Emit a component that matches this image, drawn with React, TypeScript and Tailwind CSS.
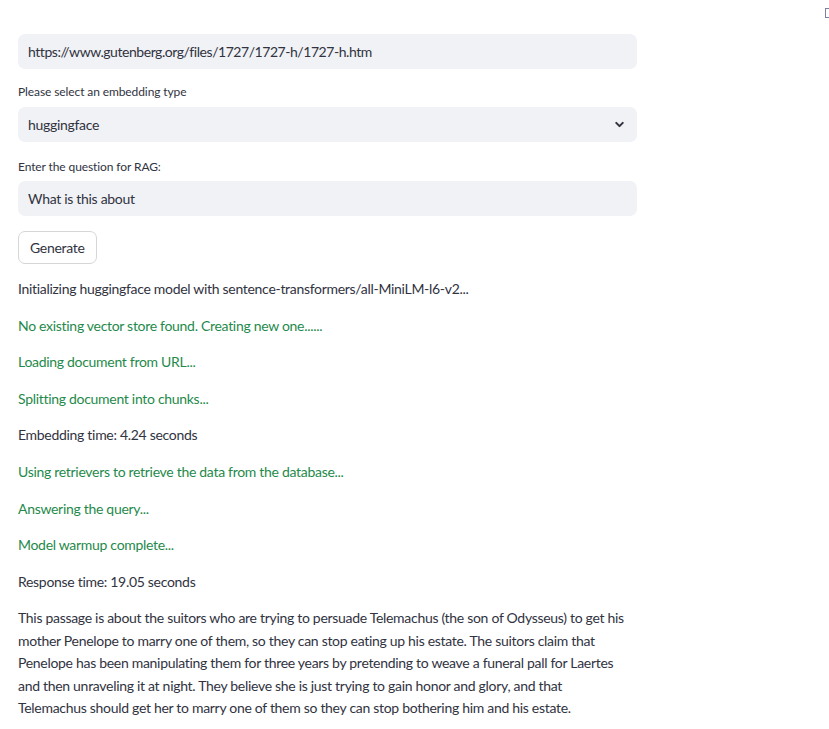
import React from 'react';

const steps: { text: string; green?: boolean }[] = [
  { text: 'Initializing huggingface model with sentence-transformers/all-MiniLM-l6-v2...' },
  { text: 'No existing vector store found. Creating new one......', green: true },
  { text: 'Loading document from URL...', green: true },
  { text: 'Splitting document into chunks...', green: true },
  { text: 'Embedding time: 4.24 seconds' },
  { text: 'Using retrievers to retrieve the data from the database...', green: true },
  { text: 'Answering the query...', green: true },
  { text: 'Model warmup complete...', green: true },
  { text: 'Response time: 19.05 seconds' },
];

const answer = [
  'This passage is about the suitors who are trying to persuade Telemachus (the son of Odysseus) to get his',
  'mother Penelope to marry one of them, so they can stop eating up his estate. The suitors claim that',
  'Penelope has been manipulating them for three years by pretending to weave a funeral pall for Laertes',
  'and then unraveling it at night. They believe she is just trying to gain honor and glory, and that',
  'Telemachus should get her to marry one of them so they can stop bothering him and his estate.',
];

export default function App() {
  return (
    <div className="relative min-h-[729px] w-[829px] bg-white text-[#31333f] font-['Lato','Liberation_Sans',sans-serif]">
      {/* clipped toolbar icon at the right edge */}
      <div className="absolute right-0 top-[8px] h-[10px] w-[4px] border-y border-l border-[#7d7fa0]" />

      <div className="w-[619px] ml-[18px] pt-[34px]">
        <div className="h-[35px] rounded-[7px] bg-[#f0f2f6] px-[10px] flex items-center text-[14px] tracking-[-0.45px]">
          https://www.gutenberg.org/files/1727/1727-h/1727-h.htm
        </div>

        <div className="mt-[15px] h-[16px] text-[12px] leading-[16px] tracking-[-0.1px]">Please select an embedding type</div>
        <div className="mt-[7px] h-[35px] rounded-[7px] bg-[#f0f2f6] pl-[10px] pr-[11px] flex items-center justify-between text-[14px] tracking-[-0.3px]">
          <span>huggingface</span>
          <svg width="13" height="13" viewBox="0 0 24 24" fill="none" stroke="#31333f" strokeWidth="3.8" strokeLinecap="round" strokeLinejoin="round">
            <path d="M6 9l6 6 6-6" />
          </svg>
        </div>

        <div className="mt-[17px] h-[16px] text-[12px] leading-[16px] tracking-[-0.1px]">Enter the question for RAG:</div>
        <div className="mt-[6px] h-[35px] rounded-[7px] bg-[#f0f2f6] px-[10px] flex items-center text-[14px] tracking-[-0.3px]">
          What is this about
        </div>

        <button className="mt-[15px] h-[33px] px-[11px] rounded-[7px] border border-[#d6d6d9] bg-white text-[14px] tracking-[-0.3px] text-[#31333f]">
          Generate
        </button>

        <div className="mt-[14px] text-[14px] leading-[22.4px] tracking-[-0.3px]">
          {steps.map((s, i) => (
            <p key={i} className={`mb-[14.2px] whitespace-nowrap ${s.green ? 'text-[#1f8a4b]' : ''}`}>
              {s.text}
            </p>
          ))}
          <div className="leading-[22.5px]">
            {answer.map((l, i) => (
              <div key={i} className="whitespace-nowrap">{l}</div>
            ))}
          </div>
        </div>
      </div>
    </div>
  );
}
